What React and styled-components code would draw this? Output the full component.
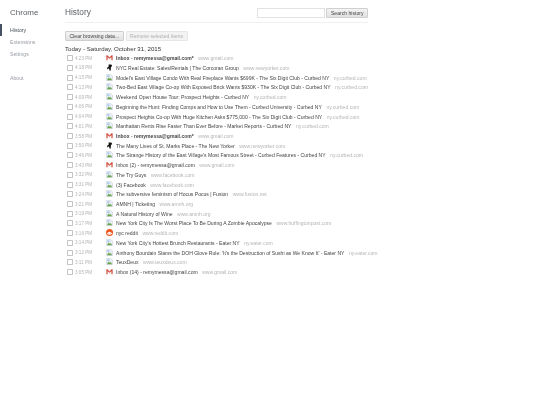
import React from "react";
import styled, { createGlobalStyle } from "styled-components";

const ROWS = [
  ["4:23 PM", "gmail", "Inbox - remymessa@gmail.com*", "www.gmail.com", true],
  ["4:18 PM", "newyorker", "NYC Real Estate: Sales/Rentals | The Corcoran Group", "www.newyorker.com"],
  ["4:15 PM", "broken", "Model's East Village Condo With Real Fireplace Wants $699K - The Six Digit Club - Curbed NY", "ny.curbed.com"],
  ["4:13 PM", "broken", "Two-Bed East Village Co-op With Exposed Brick Wants $930K - The Six Digit Club - Curbed NY", "ny.curbed.com"],
  ["4:09 PM", "broken", "Weekend Open House Tour: Prospect Heights - Curbed NY", "ny.curbed.com"],
  ["4:06 PM", "broken", "Beginning the Hunt: Finding Comps and How to Use Them - Curbed University - Curbed NY", "ny.curbed.com"],
  ["4:04 PM", "broken", "Prospect Heights Co-op With Huge Kitchen Asks $775,000 - The Six Digit Club - Curbed NY", "ny.curbed.com"],
  ["4:01 PM", "broken", "Manhattan Rents Rise Faster Than Ever Before - Market Reports - Curbed NY", "ny.curbed.com"],
  ["3:58 PM", "gmail", "Inbox - remymessa@gmail.com*", "www.gmail.com", true],
  ["3:50 PM", "newyorker", "The Many Lives of St. Marks Place - The New Yorker", "www.newyorker.com"],
  ["3:46 PM", "broken", "The Strange History of the East Village's Most Famous Street - Curbed Features - Curbed NY", "ny.curbed.com"],
  ["3:43 PM", "gmail", "Inbox (2) - remymessa@gmail.com", "www.gmail.com"],
  ["3:32 PM", "broken", "The Try Guys", "www.facebook.com"],
  ["3:31 PM", "broken", "(3) Facebook", "www.facebook.com"],
  ["3:24 PM", "broken", "The subversive feminism of Hocus Pocus | Fusion", "www.fusion.net"],
  ["3:21 PM", "broken", "AMNH | Ticketing", "www.amnh.org"],
  ["3:19 PM", "broken", "A Natural History of Wine", "www.amnh.org"],
  ["3:17 PM", "broken", "New York City Is The Worst Place To Be During A Zombie Apocalypse", "www.huffingtonpost.com"],
  ["3:16 PM", "reddit", "nyc reddit", "www.reddit.com"],
  ["3:14 PM", "broken", "New York City's Hottest Brunch Restaurants - Eater NY", "ny.eater.com"],
  ["3:12 PM", "broken", "Anthony Bourdain Slams the DOH Glove Rule: 'It's the Destruction of Sushi as We Know It' - Eater NY", "ny.eater.com"],
  ["3:11 PM", "broken", "TeuxDeux", "www.teuxdeux.com"],
  ["3:05 PM", "gmail", "Inbox (14) - remymessa@gmail.com", "www.gmail.com"],
];

function Favicon({ kind }) {
  if (kind === "gmail") {
    return (
      <svg width="7" height="7" viewBox="0 0 16 16">
        <path d="M1 3h14v11H1z" fill="#f4f4f4" />
        <path d="M1 14V3h2l5 5 5-5h2v11h-2.5V7L8 11 3.5 7v7z" fill="#d2402f" />
      </svg>
    );
  }
  if (kind === "newyorker") {
    return (
      <svg width="7" height="7" viewBox="0 0 16 16">
        <path d="M6 1h6l2 3-2 3-1 1v7H8l-1-5-3 1-2 2 1-5 3-2z" fill="#111" />
      </svg>
    );
  }
  if (kind === "reddit") {
    return (
      <svg width="7" height="7" viewBox="0 0 16 16">
        <circle cx="8" cy="8" r="8" fill="#f0561f" />
        <ellipse cx="8" cy="9.5" rx="5" ry="3.5" fill="#fff" />
        <circle cx="6" cy="9" r="1" fill="#f0561f" />
        <circle cx="10" cy="9" r="1" fill="#f0561f" />
      </svg>
    );
  }
  return (
    <svg width="7" height="7" viewBox="0 0 16 16">
      <path d="M1 1h10l4 4v10H1z" fill="#e9edf4" stroke="#b9c2d0" />
      <path d="M2 14l4-6 3 3 2-2 3 5z" fill="#6aa84f" />
      <path d="M3 3h5v4H3z" fill="#a9c8ee" />
    </svg>
  );
}

function Row({ time, icon, title, domain, bold }) {
  return (
    <Entry>
      <Check />
      <Time>{time}</Time>
      <IconSlot>
        <Favicon kind={icon} />
      </IconSlot>
      <Title $bold={bold}>{title}</Title>
      <Domain>{domain}</Domain>
    </Entry>
  );
}

export default function App() {
  return (
    <Page>
      <GlobalStyle />
      <Sidebar>
        <Brand>Chrome</Brand>
        <NavList>
          <NavItem $active>History</NavItem>
          <NavItem>Extensions</NavItem>
          <NavItem>Settings</NavItem>
          <NavItem $gap>About</NavItem>
        </NavList>
      </Sidebar>
      <Main>
        <Header>
          <Heading>History</Heading>
          <SearchBox>
            <SearchInput />
            <Button>Search history</Button>
          </SearchBox>
        </Header>
        <Actions>
          <Button>Clear browsing data...</Button>
          <Button disabled>Remove selected items</Button>
        </Actions>
        <DayTitle>Today - Saturday, October 31, 2015</DayTitle>
        <Entries>
          {ROWS.map(([time, icon, title, domain, bold], i) => (
            <Row key={i} time={time} icon={icon} title={title} domain={domain} bold={bold} />
          ))}
        </Entries>
      </Main>
    </Page>
  );
}

const GlobalStyle = createGlobalStyle`
  html, body {
    margin: 0;
    padding: 0;
    background: #fff;
  }
`;

const Page = styled.div`
  display: flex;
  width: 540px;
  height: 405px;
  overflow: hidden;
  font-family: "Liberation Sans", Arial, sans-serif;
  color: #303942;
  filter: blur(0.4px);
`;

const Sidebar = styled.div`
  width: 65px;
  flex-shrink: 0;
  padding-top: 8px;
`;

const Brand = styled.div`
  height: 10px;
  line-height: 10px;
  padding-left: 10px;
  font-size: 8px;
  color: #5c6166;
`;

const NavList = styled.div`
  margin-top: 6px;
`;

const NavItem = styled.div`
  height: 12.2px;
  line-height: 12.2px;
  padding-left: ${(p) => (p.$active ? "8px" : "10px")};
  margin-top: ${(p) => (p.$gap ? "11px" : "0")};
  border-left: ${(p) => (p.$active ? "2px solid #465263" : "none")};
  font-size: 5.2px;
  color: ${(p) => (p.$active ? "#464e5a" : "#969ba1")};
`;

const Main = styled.div`
  width: 303px;
  flex-shrink: 0;
`;

const Header = styled.div`
  display: flex;
  justify-content: space-between;
  align-items: center;
  height: 23px;
  padding-top: 4.5px;
  box-sizing: border-box;
  border-bottom: 1px solid #f0f0f0;
`;

const Heading = styled.h1`
  margin: 0 0 2px;
  font-size: 8.3px;
  font-weight: normal;
  color: #5c6166;
`;

const SearchBox = styled.div`
  display: flex;
  gap: 1.5px;
`;

const SearchInput = styled.div`
  width: 66px;
  height: 8px;
  border: 1px solid #e2e2e2;
  background: #fff;
`;

const Button = styled.button`
  height: 10px;
  padding: 0 3.5px;
  border: 0.5px solid ${(p) => (p.disabled ? "#e6e6e6" : "#cfcfcf")};
  border-radius: 1px;
  background: ${(p) => (p.disabled ? "#f3f3f3" : "linear-gradient(#f4f4f4, #e2e2e2)")};
  font-family: inherit;
  font-size: 5.1px;
  color: ${(p) => (p.disabled ? "#aeaeae" : "#444")};
  white-space: nowrap;
`;

const Actions = styled.div`
  display: flex;
  gap: 2px;
  margin-top: 7.5px;
`;

const DayTitle = styled.h3`
  margin: 3.5px 0 0;
  height: 9.4px;
  line-height: 10px;
  font-size: 6.1px;
  font-weight: normal;
  color: #333;
`;

const Entries = styled.div`
  display: flex;
  flex-direction: column;
`;

const Entry = styled.div`
  display: flex;
  align-items: center;
  height: 9.72px;
  padding-left: 2px;
  white-space: nowrap;
`;

const Check = styled.span`
  width: 4px;
  height: 4px;
  margin-right: 2px;
  flex-shrink: 0;
  border: 0.5px solid #c4c4c4;
  border-radius: 0.7px;
  background: #fff;
`;

const Time = styled.span`
  width: 31px;
  flex-shrink: 0;
  font-size: 4.6px;
  color: #b4b4b4;
`;

const IconSlot = styled.span`
  display: flex;
  width: 10px;
  flex-shrink: 0;
  margin-top: -1px;
`;

const Title = styled.span`
  font-size: 5.07px;
  font-weight: ${(p) => (p.$bold ? "bold" : "normal")};
  color: #444;
`;

const Domain = styled.span`
  margin-left: 4.5px;
  font-size: 5.07px;
  color: #b4b4b4;
`;
